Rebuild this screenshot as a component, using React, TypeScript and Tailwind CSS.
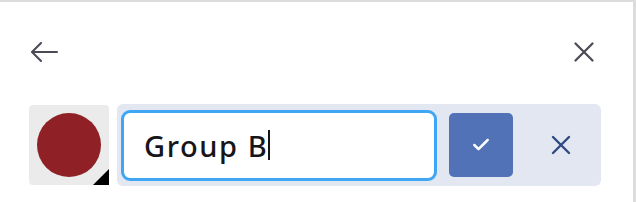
import { Check } from 'lucide-react';

export default function App() {
  return (
    <div className="box-border h-[202px] w-[636px] overflow-hidden border-r-[3px] border-t-2 border-[#dcdcdc] bg-white font-['Noto_Sans','Open_Sans',sans-serif]">
      <div className="flex h-[102px] items-center justify-between pl-[31px] pr-[39px] pb-[2px]">
        <button className="flex h-[20px] w-[27px] items-center text-[#4a4a55]">
          <svg width="27" height="20" viewBox="0 0 27 20" fill="none" stroke="currentColor" strokeWidth="2" strokeLinecap="round" strokeLinejoin="round">
            <path d="M10 1 L1 10 L10 19" />
            <path d="M1.5 10 H26" />
          </svg>
        </button>
        <button className="flex h-[20px] w-[20px] items-center justify-center text-[#4a4a55]">
          <svg width="20" height="20" viewBox="0 0 20 20" fill="none" stroke="currentColor" strokeWidth="2.2" strokeLinecap="round">
            <path d="M1.5 1.5 L18.5 18.5 M18.5 1.5 L1.5 18.5" />
          </svg>
        </button>
      </div>

      <div className="flex items-center gap-2 pl-[29px]">
        <button className="relative flex h-[80px] w-[80px] items-center justify-center rounded-[4px] bg-[#ebebeb]">
          <span className="h-[64px] w-[64px] rounded-full bg-[#8f2126]" />
          <svg className="absolute bottom-0 right-0" width="16" height="16" viewBox="0 0 16 16">
            <path d="M16 0 L16 16 L0 16 Z" fill="#000" />
          </svg>
        </button>

        <div className="flex h-[82px] w-[484px] items-center rounded-[6px] bg-[#e3e7f2] pl-[4px]">
          <div className="flex h-[71px] w-[316px] items-center rounded-[9px] border-[3px] border-[#3fa6f6] bg-white pl-[20px]">
            <span className="text-[29px] font-medium leading-none tracking-[1.6px] text-[#16161a]">Group B</span>
            <span className="h-[30px] w-[2px] bg-[#16161a]" />
          </div>
          <button className="ml-[12px] flex h-[64px] w-[64px] items-center justify-center rounded-[5px] bg-[#5272b8] text-white">
            <Check size={20} strokeWidth={3} />
          </button>
          <button className="ml-[38px] flex h-[20px] w-[20px] items-center justify-center text-[#2f4a80]">
            <svg width="20" height="20" viewBox="0 0 20 20" fill="none" stroke="currentColor" strokeWidth="2.4" strokeLinecap="round">
              <path d="M2 2 L18 18 M18 2 L2 18" />
            </svg>
          </button>
        </div>
      </div>
    </div>
  );
}
